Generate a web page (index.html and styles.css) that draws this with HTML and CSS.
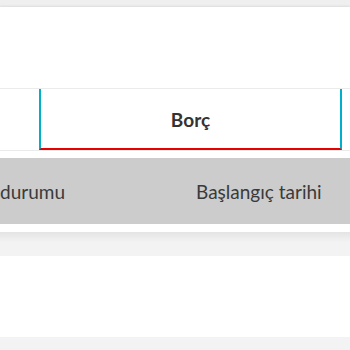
FILE: index.html
```html
<!DOCTYPE html>
<html lang="tr">
<head>
<meta charset="utf-8">
<link rel="stylesheet" href="styles.css">
</head>
<body>
<div class="topband"></div>
<div class="card">
  <div class="spacer"></div>
  <div class="tabs">
    <div class="tab tab-side"></div>
    <div class="tab tab-active">Borç</div>
    <div class="tab tab-rest"></div>
  </div>
  <div class="thead">
    <div class="th th-first"><span>Ödeme durumu</span></div>
    <div class="th th-second">Başlangıç tarihi</div>
  </div>
</div>
<div class="gap"></div>
<div class="card2"></div>
<div class="bottom"></div>
</body>
</html>
```
FILE: styles.css
```css
html, body {
  margin: 0;
  padding: 0;
  background: #f3f3f3;
  font-family: Lato, "Open Sans", sans-serif;
  width: 350px;
  height: 350px;
  overflow: hidden;
}
.topband {
  height: 7px;
  background: #efefef;
}
.card {
  background: #fff;
  height: 225px;
  box-shadow: 0 -1px 2px rgba(0,0,0,0.08);
}
.spacer {
  height: 81px;
}
.tabs {
  display: flex;
  height: 61px;
  border-top: 1px solid #ebebeb;
  border-bottom: 1px solid #ebebeb;
}
.tab-side {
  width: 39px;
}
.tab-active {
  width: 303px;
  border-left: 2px solid #00b0ca;
  border-right: 2px solid #00b0ca;
  border-bottom: 2px solid #e60000;
  margin-bottom: -1px;
  display: flex;
  align-items: center;
  justify-content: center;
  font-size: 19px;
  font-weight: 700;
  color: #333;
  padding-top: 1px;
  box-sizing: border-box;
  height: 61px;
}
.tab-rest {
  flex: 1;
}
.thead {
  margin-top: 7px;
  height: 66px;
  background: #cccccc;
  display: flex;
  align-items: center;
  font-size: 19px;
  color: #3a3a3a;
}
.th-first {
  width: 65px;
  display: flex;
  justify-content: flex-end;
  overflow: hidden;
  white-space: nowrap;
}
.th-second {
  margin-left: 131px;
  white-space: nowrap;
}
.gap {
  height: 24px;
  background: linear-gradient(#e4e4e4, #f3f3f3 10px);
}
.card2 {
  height: 81px;
  background: #fff;
}
.bottom {
  height: 13px;
  background: #f3f3f3;
}
```
